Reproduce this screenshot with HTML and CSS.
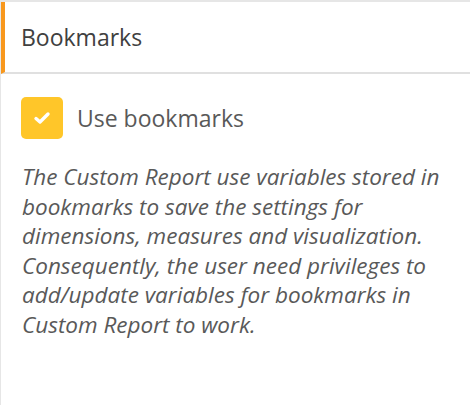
FILE: index.html
```html
<!DOCTYPE html>
<html lang="en">
<head>
  <meta charset="UTF-8">
  <title>Bookmarks</title>
  <link rel="stylesheet" href="styles.css">
</head>
<body>

  <div class="panel">
    <div class="panel-header">Bookmarks</div>

    <div class="panel-body">
      <label class="check-row">
        <span class="checkbox">
          <svg width="18" height="14" viewBox="0 0 18 14">
            <path d="M3 7.5 L7 11 L15 3" fill="none" stroke="#fff" stroke-width="3.4" stroke-linecap="round" stroke-linejoin="round"/>
          </svg>
        </span>
        <span class="check-label">Use bookmarks</span>
      </label>

      <p class="note">The Custom Report use variables stored in bookmarks to save the settings for dimensions, measures and visualization. Consequently, the user need privileges to add/update variables for bookmarks in Custom Report to work.</p>
    </div>
  </div>

</body>
</html>
```

FILE: styles.css
```css
body {
  margin: 0;
  background-color: #fff;
  font-family: "Open Sans", sans-serif;
}

.panel {
  border-top: 2px solid #e6e6e6;
  border-left: 1px solid #e6e6e6;
  height: 405px;
  box-sizing: border-box;
}

.panel-header {
  height: 72px;
  box-sizing: border-box;
  border-left: 4px solid #f8981d;
  border-bottom: 2px solid #e0e0e0;
  padding-left: 16px;
  display: flex;
  align-items: center;
  font-size: 23px;
  color: #404040;
}

.panel-body {
  padding: 23px 12px 0 20px;
}

.check-row {
  display: flex;
  align-items: center;
  gap: 14px;
}

.checkbox {
  width: 42px;
  height: 42px;
  border-radius: 5px;
  background-color: #ffc629;
  display: flex;
  align-items: center;
  justify-content: center;
}

.check-label {
  font-size: 23px;
  color: #595959;
}

.note {
  margin: 23px 0 0 1px;
  font-size: 22.5px;
  font-style: italic;
  line-height: 29.5px;
  color: #595959;
}
```
